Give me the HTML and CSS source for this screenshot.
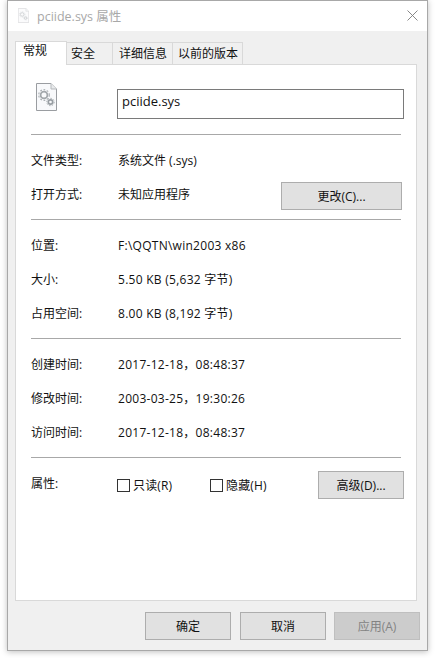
FILE: index.html
```html
<!DOCTYPE html>
<html lang="zh-CN">
<head>
<meta charset="utf-8">
<title>pciide.sys 属性</title>
<link rel="stylesheet" href="styles.css">
</head>
<body>
<div class="window">
  <div class="titlebar">
    <svg class="title-icon" viewBox="0 0 21 28" width="11" height="15"><use href="#fileicon"/></svg>
    <span class="title">pciide.sys 属性</span>
    <svg class="close" viewBox="0 0 11 11" width="11" height="11"><path d="M0.5 0.5L10.5 10.5M10.5 0.5L0.5 10.5" stroke="#7a7a7a" stroke-width="0.9" fill="none"/></svg>
  </div>
  <div class="body">
    <div class="tabs">
      <div class="tab active">常规</div>
      <div class="tab w1">安全</div>
      <div class="tab w2">详细信息</div>
      <div class="tab w3">以前的版本</div>
    </div>
    <div class="panel">
      <div class="head">
        <svg class="file-icon" viewBox="0 0 21 28" width="21" height="28">
          <defs>
            <g id="fileicon">
              <path d="M0.5 0.5H15L20.5 6V27.5H0.5Z" fill="#f8f9fb" stroke="#9a9da1"/>
              <path d="M15 0.5V6H20.5" fill="#e8eaec" stroke="#b5b8bb"/>
              <circle cx="8" cy="12" r="3.4" fill="none" stroke="#a2a7ab" stroke-width="1.8"/>
              <circle cx="8" cy="12" r="5.3" fill="none" stroke="#acb1b5" stroke-width="1.2" stroke-dasharray="1.8 1.6"/>
              <circle cx="14.5" cy="19" r="2.2" fill="none" stroke="#989ea3" stroke-width="1.7"/>
              <circle cx="14.5" cy="19" r="3.7" fill="none" stroke="#a5abaf" stroke-width="1" stroke-dasharray="1.5 1.3"/>
            </g>
          </defs>
          <use href="#fileicon"/>
        </svg>
        <div class="name-box">pciide.sys</div>
      </div>
      <div class="sep"></div>
      <div class="section s-type">
        <div class="row"><span class="label">文件类型:</span><span class="value">系统文件 (.sys)</span></div>
        <div class="row"><span class="label">打开方式:</span><span class="value">未知应用程序</span><button class="btn change">更改(C)...</button></div>
      </div>
      <div class="sep"></div>
      <div class="section s-loc">
        <div class="row"><span class="label">位置:</span><span class="value wide">F:\QQTN\win2003 x86</span></div>
        <div class="row"><span class="label">大小:</span><span class="value wide">5.50 KB (5,632 字节)</span></div>
        <div class="row"><span class="label">占用空间:</span><span class="value wide">8.00 KB (8,192 字节)</span></div>
      </div>
      <div class="sep"></div>
      <div class="section s-loc">
        <div class="row"><span class="label">创建时间:</span><span class="value wide">2017-12-18，08:48:37</span></div>
        <div class="row"><span class="label">修改时间:</span><span class="value wide">2003-03-25，19:30:26</span></div>
        <div class="row"><span class="label">访问时间:</span><span class="value wide">2017-12-18，08:48:37</span></div>
      </div>
      <div class="sep"></div>
      <div class="attrs">
        <span class="label attr-label">属性:</span>
        <div class="checks">
          <span class="check c1"><i class="box"></i>只读(R)</span>
          <span class="check"><i class="box"></i>隐藏(H)</span>
        </div>
        <button class="btn advanced">高级(D)...</button>
      </div>
    </div>
    <div class="actions">
      <button class="btn act">确定</button>
      <button class="btn act">取消</button>
      <button class="btn act disabled">应用(A)</button>
    </div>
  </div>
</div>
</body>
</html>
```
FILE: styles.css
```css
* { box-sizing: border-box; }
html, body { margin: 0; padding: 0; background: #fff; }
body {
  width: 435px;
  height: 658px;
  overflow: hidden;
  font-family: "Open Sans", "Noto Sans CJK SC", sans-serif;
  font-size: 12px;
  color: #111;
}
.window {
  margin-left: 7px;
  width: 421px;
  height: 651px;
  border: 1px solid #a8a8a8;
  background: #f0f0f0;
  box-shadow: 0 1px 6px rgba(0,0,0,.25);
  display: flex;
  flex-direction: column;
}
.titlebar {
  height: 30px;
  background: #fff;
  display: flex;
  align-items: center;
  padding: 0 9px 2px 10px;
  flex: none;
}
.title-icon { opacity: .5; flex: none; }
.title { margin-left: 8px; color: #a8a8a8; font-size: 12.5px; }
.close { margin-left: auto; }
.body { flex: 1; display: flex; flex-direction: column; padding: 10px 10px 0 7px; }
.tabs { display: flex; height: 23px; align-items: flex-end; flex: none; }
.tab {
  height: 22px;
  border: 1px solid #d9d9d9;
  border-bottom: none;
  border-left: none;
  background: #f0f0f0;
  display: flex;
  align-items: center;
  padding-left: 4px;
  line-height: 1;
}
.tab.active {
  width: 52px;
  height: 24px;
  margin-bottom: -1px;
  border-left: 1px solid #d9d9d9;
  background: #fff;
  padding: 0 0 6px 7px;
  z-index: 1;
}
.w1 { width: 46px; }
.w2 { width: 60px; padding-left: 6px; }
.w3 { width: 70px; padding-left: 5px; }
.panel {
  width: 402px;
  height: 537px;
  background: #fff;
  border: 1px solid #d9d9d9;
  padding: 0 15px;
  flex: none;
}
.head { height: 69px; display: flex; }
.file-icon { margin: 18px 0 0 5px; flex: none; }
.name-box {
  margin: 24px 0 0 60px;
  width: 287px;
  height: 30px;
  border: 1px solid #7a7a7a;
  padding-left: 4px;
  line-height: 22px;
  font-size: 13px;
  flex: none;
}
.sep { height: 1px; background: #a8a8a8; width: 370px; }
.section { padding-top: 8px; }
.s-type { height: 84px; }
.s-loc { height: 118px; }
.row { display: flex; align-items: center; height: 34px; }
.label { width: 87px; flex: none; }
.value { flex: none; }
.wide { letter-spacing: .27px; }
.btn {
  font: inherit;
  color: #111;
  background: #e1e1e1;
  border: 1px solid #adadad;
  border-radius: 0;
  padding: 0;
  height: 28px;
}
.change { width: 121px; margin-left: auto; margin-right: -1px; position: relative; top: 2px; }
.attrs { display: flex; align-items: flex-start; padding-top: 13px; }
.attr-label { margin-top: 3px; }
.checks { display: flex; margin-top: 5px; width: 200px; flex: none; letter-spacing: .15px; }
.check { display: flex; align-items: center; }
.c1 { width: 93px; }
.box {
  width: 13px;
  height: 13px;
  border: 1px solid #333;
  margin-right: 3px;
  margin-left: -1px;
  background: #fff;
}
.advanced { width: 86px; flex: none; }
.actions { display: flex; justify-content: flex-end; gap: 8px; padding-top: 11px; margin-right: -3px; }
.act { width: 86px; }
.act:nth-child(1) { margin-right: 1px; }
.disabled { background: #ccc; color: #838383; border-color: #bfbfbf; }
```
